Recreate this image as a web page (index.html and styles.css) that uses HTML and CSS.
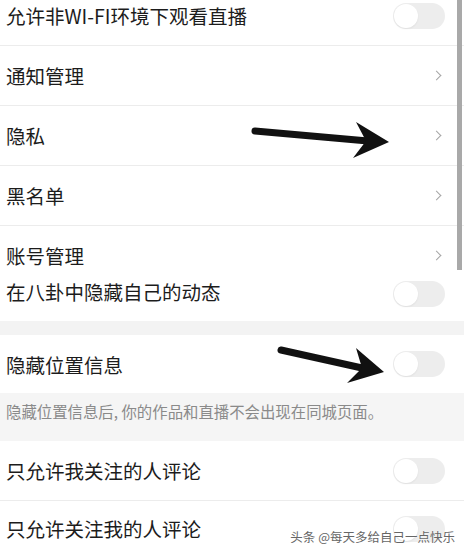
FILE: index.html
```html
<!DOCTYPE html>
<html lang="zh">
<head>
    <meta charset="UTF-8">
    <meta name="viewport" content="width=device-width, initial-scale=1.0">
    <title>隐私设置</title>
    <link rel="stylesheet" href="styles.css">
</head>
<body>
    <div class="screen">
        <div class="settings">
            <div class="row first line">
                <span class="label">允许非WI-FI环境下观看直播</span>
                <span class="switch"></span>
            </div>
            <div class="row line">
                <span class="label">通知管理</span>
                <span class="chevron"></span>
            </div>
            <div class="row line">
                <span class="label">隐私</span>
                <span class="chevron"></span>
            </div>
            <div class="row line">
                <span class="label">黑名单</span>
                <span class="chevron"></span>
            </div>
            <div class="row account">
                <span class="label">账号管理</span>
                <span class="chevron"></span>
            </div>
            <div class="row gossip">
                <span class="label">在八卦中隐藏自己的动态</span>
                <span class="switch"></span>
            </div>

            <div class="gap"></div>

            <div class="row location">
                <span class="label">隐藏位置信息</span>
                <span class="switch"></span>
            </div>
            <div class="note">隐藏位置信息后, 你的作品和直播不会出现在同城页面。</div>

            <div class="row line">
                <span class="label">只允许我关注的人评论</span>
                <span class="switch"></span>
            </div>
            <div class="row last">
                <span class="label">只允许关注我的人评论</span>
                <span class="switch"></span>
            </div>
        </div>

        <div class="scrollbar"></div>

        <!-- hand drawn arrows on top of the screenshot -->
        <svg class="arrows" width="464" height="552" viewBox="0 0 464 552">
            <line x1="255" y1="131" x2="368" y2="141" stroke="#111" stroke-width="7" stroke-linecap="round"/>
            <polygon points="356,122 389,142 353,158 366,141" fill="#111"/>
            <line x1="281" y1="350" x2="362" y2="368" stroke="#111" stroke-width="7" stroke-linecap="round"/>
            <polygon points="356,348 384,372 347,383 362,368" fill="#111"/>
        </svg>

        <div class="watermark">头条 @每天多给自己一点快乐</div>
    </div>
</body>
</html>
```

FILE: styles.css
```css
body {
    margin: 0;
    background: #fff;
    font-family: "Noto Sans CJK SC", "Noto Sans", sans-serif;
    overflow: hidden;
}

.screen {
    position: relative;
    width: 464px;
    height: 552px;
    overflow: hidden;
}

.settings {
    margin-top: -14px;
}

.row {
    display: flex;
    align-items: center;
    justify-content: space-between;
    height: 60px;
    padding: 0 19px 0 6px;
    box-sizing: border-box;
}

.row.line {
    border-bottom: 1px solid #ececec;
}

.label {
    font-size: 19.5px;
    color: #1c1c1c;
    letter-spacing: 0;
}

.row.account {
    height: 47px;
    align-items: flex-start;
    padding-top: 15px;
}

.row.gossip {
    height: 48px;
    align-items: flex-start;
    padding-top: 4px;
}

.row.gossip .switch {
    margin-top: 4px;
}

.row.location {
    height: 58px;
}

.row.last {
    padding-bottom: 5px;
}

.gap {
    height: 14px;
    background: #f3f3f3;
}

.note {
    height: 48px;
    background: #f5f5f5;
    padding: 7px 0 0 6px;
    box-sizing: border-box;
    font-size: 15.4px;
    color: #8a8a8a;
}

.switch {
    position: relative;
    width: 52px;
    height: 26px;
    border-radius: 13px;
    background: #ededed;
}

.switch::before {
    content: "";
    position: absolute;
    left: 1px;
    top: 1px;
    width: 24px;
    height: 24px;
    border-radius: 50%;
    background: #fff;
    box-shadow: 0 1px 2px rgba(0,0,0,0.06);
}

.chevron {
    width: 6px;
    height: 6px;
    margin-right: 5px;
    border-top: 1.3px solid #a5a5a5;
    border-right: 1.3px solid #a5a5a5;
    transform: rotate(45deg);
}

.row.account .chevron {
    margin-top: 11px;
}

.scrollbar {
    position: absolute;
    left: 457px;
    top: 0;
    width: 5px;
    height: 270px;
    background: #a9a9a9;
}

.arrows {
    position: absolute;
    left: 0;
    top: 0;
}

.watermark {
    position: absolute;
    right: 9px;
    bottom: 6px;
    font-size: 12.5px;
    color: #666;
    text-shadow: 0 0 2px #fff;
}
```
